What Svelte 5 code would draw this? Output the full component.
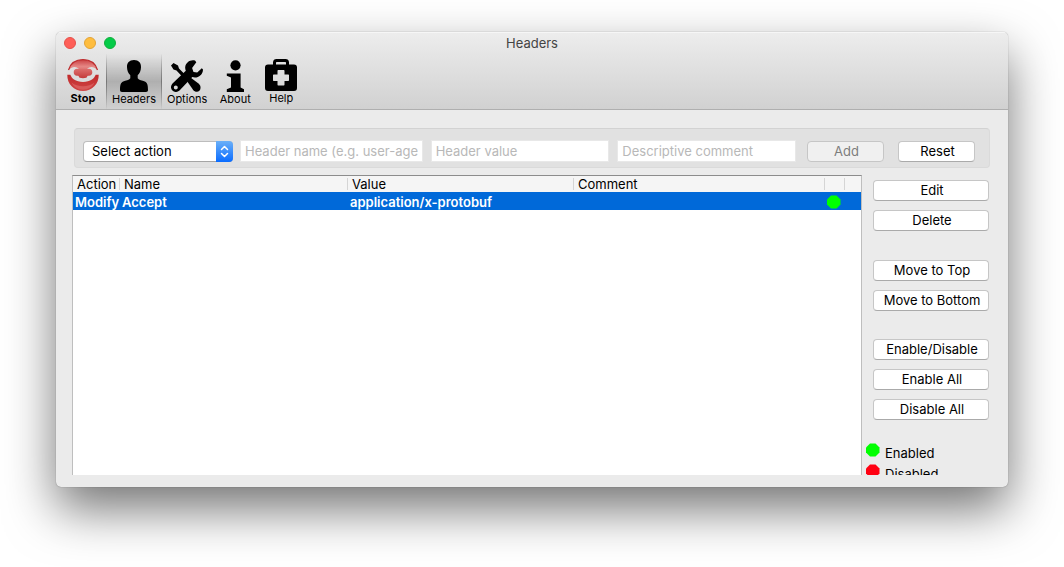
<script>
  const tools = ['Stop', 'Headers', 'Options', 'About', 'Help'];
  let active = $state('Headers');
  let action = $state('');

  const groups = [
    ['Edit', 'Delete'],
    ['Move to Top', 'Move to Bottom'],
    ['Enable/Disable', 'Enable All', 'Disable All'],
  ];

  const rows = [
    { action: 'Modify', name: 'Accept', value: 'application/x-protobuf', comment: '', enabled: true },
  ];
</script>

{#snippet dot(on)}
  <svg class="dot" viewBox="0 0 14 14" role="img" aria-label={on ? 'enabled' : 'disabled'}>
    <path d="M4 0.500h5.500l4 4v5l-4 4h-5.500l-4-4v-5z" fill={on ? '#00ff00' : '#ff0012'} />
  </svg>
{/snippet}

{#snippet icon(name)}
  <svg class="icon" viewBox="0 0 32 32" aria-hidden="true">
    {#if name === 'Stop'}
      <defs>
        <linearGradient id="dome" x1="0" y1="0" x2="0" y2="1">
          <stop offset="0" stop-color="#c93f41" />
          <stop offset=".6" stop-color="#e58684" />
          <stop offset="1" stop-color="#dd6f6d" />
        </linearGradient>
        <linearGradient id="core" x1="0" y1="0" x2="0" y2="1">
          <stop offset="0" stop-color="#dd6f6d" />
          <stop offset="1" stop-color="#c43a3a" />
        </linearGradient>
        <linearGradient id="base" x1="0" y1="0" x2="0" y2="1">
          <stop offset="0" stop-color="#c02a2b" />
          <stop offset="1" stop-color="#d04646" />
        </linearGradient>
      </defs>
      <path d="M1.500 11.200C3.500 4.500 9 .5 16 .5s12.500 4 14.500 10.700C28.500 9 26.500 8 24.500 8c-2 0-3 .8-4 1.300V12h-9V9.300C10.500 8.800 9.500 8 7.500 8c-2 0-4 1-6 3.200z" fill="url(#dome)" />
      <path d="M1.500 11C3.500 4.500 9 .7 16 .7s12.500 3.800 14.500 10.300" fill="none" stroke="#bd2c2e" stroke-width="1.200" />
      <path d="M10 9.800h12c2 0 3.300 1.500 3.300 3.500S24 16.800 22 16.800h-1c-.6 0-.8.3-.8.8 0 1-1.500 1.700-4.200 1.700s-4.200-.7-4.200-1.700c0-.5-.2-.8-.8-.8h-1c-2 0-3.300-1.500-3.300-3.500S8 9.800 10 9.800z" fill="url(#core)" />
      <path d="M.3 15.800h3C4.500 18 5 19.300 7 20.600c2.500 1.700 5.500 2.300 9 2.300s6.500-.6 9-2.300c2-1.300 2.500-2.600 3.700-4.800h3C32 25 25 32 16 32S0 25 .3 15.800z" fill="url(#base)" />
      <path d="M4.500 23.500c3.200 2.600 7 3.800 11.500 3.800s8.300-1.200 11.500-3.800C25.500 28 21 30.700 16 30.700S6.500 28 4.500 23.500z" fill="#d85b5a" />
    {:else if name === 'Headers'}
      <path d="M16 0c4.700 0 7.200 3 7 7.200-.1 3.400-1.400 6.400-3.300 8.100v2.900c1.200 1.800 4.600 2.300 7.100 3.200 2.700 1 3.200 4.200 3.200 8.600 0 1.300-.7 2-2 2H4c-1.300 0-2-.7-2-2 0-4.400.5-7.600 3.200-8.600 2.500-.9 5.900-1.400 7.100-3.200v-2.900C10.400 13.600 9.100 10.600 9 7.200 8.800 3 11.300 0 16 0z" />
    {:else if name === 'Options'}
      <path d="M0 5.500 2.500 3 7 5.500 8 8.500 15 15.500 12.500 18 5.500 10.500 2.500 9.500z" />
      <path d="m19.500 17.500 8.300 6.300c2.300 2.200 2.100 5.200.6 6.900-1.600 1.700-4.700 1.400-6.400-1l-5.700-8.100z" />
      <path fill-rule="evenodd" d="M24 .5c-4.800-1.200-9.200 1.900-9.800 6.500-.1 1.500.1 2.500.6 3.700L1.500 23.500c-4.500 5 2 11.500 7 7L21.300 17.100c4.900 1.700 10.700-1.800 10.700-7.600l-1.200-1.200-4.600 4.200-3.700-.6-1.400-3.900 4.200-5.800zM4.800 25.400a2 2 0 1 1 0 4 2 2 0 0 1 0-4z" />
    {:else if name === 'About'}
      <circle cx="16.500" cy="5.300" r="5.100" />
      <path d="M9.800 13.500h11.800v14l3.400 1.700V32H7.800v-2.800l4.200-1.700v-10l-4.200-1.800v-2.200z" />
    {:else}
      <path fill-rule="evenodd" d="M8 5.500V3.500C8 1 9.500 0 11.500 0h9C22.500 0 24 1 24 3.500v2h5c2 0 3 1.200 3 3V29c0 2-1 3-3 3H3c-2 0-3-1-3-3V8.500c0-1.800 1-3 3-3zM11 5.500h10V4c0-.7-.3-1-1-1h-8c-.7 0-1 .3-1 1zM13.500 11c-.7 0-1 .3-1 1v3.500H9c-.7 0-1 .3-1 1v4.500c0 .7.3 1 1 1h3.500v3.500c0 .7.3 1 1 1h5c.7 0 1-.3 1-1v-3.500H23c.7 0 1-.3 1-1v-4.500c0-.7-.3-1-1-1h-3.500V12c0-.7-.3-1-1-1z" />
    {/if}
  </svg>
{/snippet}

<div class="desktop">
  <div class="window">
    <header>
      <div class="titlebar">
        <div class="lights">
          <button class="light close" aria-label="Close"></button>
          <button class="light minimize" aria-label="Minimize"></button>
          <button class="light zoom" aria-label="Zoom"></button>
        </div>
        <h1>Headers</h1>
      </div>
      <nav>
        {#each tools as tool}
          <button class="tool" class:active={active === tool} class:strong={tool === 'Stop'} onclick={() => (active = tool)}>
            {@render icon(tool)}
            <span>{tool}</span>
          </button>
        {/each}
      </nav>
    </header>

    <main>
      <form class="panel" onsubmit={(e) => e.preventDefault()}>
        <div class="select">
          <select aria-label="Action" bind:value={action}>
            <option value="">Select action</option>
            <option>Add</option>
            <option>Modify</option>
            <option>Filter</option>
          </select>
          <svg viewBox="0 0 17 21" aria-hidden="true">
            <path d="M5.500 8.500 8.500 5.500 11.500 8.500M5.500 12.500 8.500 15.500 11.500 12.500" fill="none" stroke="#fff" stroke-width="1.500" stroke-linecap="round" stroke-linejoin="round" />
          </svg>
        </div>
        <div class="fields">
          <input type="text" aria-label="Header name" placeholder="Header name (e.g. user-agent)" />
          <input type="text" aria-label="Header value" placeholder="Header value" />
          <input type="text" aria-label="Comment" placeholder="Descriptive comment" />
        </div>
        <div class="submit">
          <button class="push" disabled>Add</button>
          <button class="push" type="reset">Reset</button>
        </div>
      </form>

      <div class="content">
        <div class="list">
          <table>
            <colgroup>
              <col class="c-action" /><col class="c-name" /><col class="c-value" /><col /><col class="c-state" /><col class="c-end" />
            </colgroup>
            <thead>
              <tr>
                <th><span>Action</span></th>
                <th><span>Name</span></th>
                <th><span>Value</span></th>
                <th><span>Comment</span></th>
                <th><span></span></th>
                <th><span></span></th>
              </tr>
            </thead>
            <tbody>
              {#each rows as row}
                <tr>
                  <td>{row.action}</td>
                  <td>{row.name}</td>
                  <td>{row.value}</td>
                  <td>{row.comment}</td>
                  <td>{@render dot(row.enabled)}</td>
                  <td></td>
                </tr>
              {/each}
            </tbody>
          </table>
        </div>

        <aside>
          {#each groups as group}
            <div class="group">
              {#each group as label}
                <button class="push">{label}</button>
              {/each}
            </div>
          {/each}
          <ul>
            <li>{@render dot(true)}<span>Enabled</span></li>
            <li>{@render dot(false)}<span>Disabled</span></li>
          </ul>
        </aside>
      </div>
    </main>
  </div>
</div>

<style>
  :global(body) {
    margin: 0;
    background: #fff;
  }

  .desktop {
    box-sizing: border-box;
    height: 100vh;
    padding: 32px 56px 80px;
    overflow: hidden;
    font: 13px/18px Inter, "Liberation Sans", sans-serif;
    color: #000;
  }

  .desktop :is(button, input, select) {
    box-sizing: border-box;
    margin: 0;
    font: inherit;
    color: inherit;
  }

  .window {
    display: flex;
    flex-direction: column;
    height: 100%;
    overflow: hidden;
    border-radius: 5px;
    background: #ebebeb;
    box-shadow: 0 0 1px rgba(0, 0, 0, 0.5), 0 22px 50px rgba(0, 0, 0, 0.55);
  }

  header {
    flex: none;
    border-bottom: 1px solid #afafaf;
    background: linear-gradient(#ededed, #d1d1d1);
    box-shadow: inset 0 1px #f6f6f6;
  }

  .titlebar {
    display: grid;
    grid-template-columns: 1fr auto 1fr;
    align-items: center;
    height: 22px;
    padding: 0 8px;
  }

  .lights {
    display: flex;
    gap: 8px;
  }

  .light {
    width: 12px;
    height: 12px;
    padding: 0;
    border: 1px solid;
    border-radius: 50%;
  }

  .light.close { background: #fe5f58; border-color: #e5504a; }
  .light.minimize { background: #febd3f; border-color: #e2a336; }
  .light.zoom { background: #04cb48; border-color: #12ae3c; }

  h1 {
    margin: 0;
    font-size: 13px;
    font-weight: 400;
    color: #444;
  }

  nav {
    display: flex;
    height: 55px;
    padding-left: 4px;
  }

  .tool {
    display: flex;
    flex-direction: column;
    align-items: center;
    min-width: 46px;
    padding: 6px 5px 0;
    border: 0;
    background: none;
  }

  .tool:last-child {
    padding-top: 5px;
  }

  .tool span {
    font-size: 11px;
    line-height: 14px;
  }

  .tool.strong {
    padding-top: 5px;
  }

  .tool.strong span {
    font-weight: 700;
  }

  .tool.active {
    background: linear-gradient(rgba(0, 0, 0, 0), rgba(0, 0, 0, 0.2) 50%, rgba(0, 0, 0, 0));
    border: solid;
    border-width: 0 1px;
    border-image: linear-gradient(transparent, #777 50%, transparent) 1;
  }

  .icon {
    width: 32px;
    height: 32px;
  }

  main {
    display: flex;
    flex: 1;
    flex-direction: column;
    gap: 7px;
    min-height: 0;
    padding: 18px 18px 12px 16px;
  }

  .panel {
    display: flex;
    align-items: center;
    gap: 7px;
    box-sizing: border-box;
    height: 40px;
    margin: 0 0 0 2px;
    padding: 6px 14px 0 8px;
    border: 1px solid #dadada;
    border-top-color: #d2d2d2;
    border-radius: 4px;
    background: #e1e1e1;
  }

  .select {
    position: relative;
    flex: none;
    width: 150px;
    height: 21px;
  }

  .select select {
    width: 100%;
    height: 21px;
    padding: 0 24px 0 8px;
    appearance: none;
    border: 1px solid #bdbdbd;
    border-bottom-color: #a5a5a5;
    border-radius: 4px;
    background: #fff;
  }

  .select svg {
    position: absolute;
    top: 0;
    right: 0;
    width: 17px;
    height: 21px;
    border-radius: 0 4px 4px 0;
    background: linear-gradient(#6bb0f8, #0a6cff);
    pointer-events: none;
  }

  .fields {
    display: grid;
    flex: 1;
    grid-template-columns: 46fr 45fr 45fr;
    gap: 8px;
    min-width: 0;
  }

  input {
    width: 100%;
    min-width: 0;
    height: 22px;
    padding: 0 4px;
    border: 1px solid #e8e8e8;
    border-radius: 0;
    background: #fff;
  }

  input::placeholder {
    color: #b8b8b8;
    opacity: 1;
  }

  .submit {
    display: flex;
    gap: 14px;
    padding-left: 4px;
  }

  .submit .push {
    width: 77px;
  }

  .push {
    height: 21px;
    padding: 0 0 1px 2px;
    border: 1px solid #c6c6c6;
    border-bottom-color: #aaa;
    border-radius: 4px;
    background: #fff;
    line-height: 18px;
    white-space: nowrap;
  }

  .desktop .push:disabled {
    border-color: #c6c6c6;
    background: #f0f0f0;
    color: #7d7d7d;
  }

  .content {
    display: flex;
    flex: 1;
    gap: 4px;
    min-height: 0;
  }

  .list {
    flex: 1;
    min-width: 0;
    overflow: hidden;
    border: solid #bebebe;
    border-width: 1px 1px 0;
    border-top-color: #8c8c8c;
    background: #fff;
  }

  table {
    width: 100%;
    table-layout: fixed;
    border-collapse: collapse;
  }

  .c-action { width: 47px; }
  .c-name { width: 228px; }
  .c-value { width: 226px; }
  .c-state { width: 20px; }
  .c-end { width: 16px; }

  th {
    height: 16px;
    padding: 0;
    background: #f5f5f5;
    font-weight: 400;
    line-height: 16px;
    text-align: left;
  }

  th span {
    display: block;
    height: 12px;
    padding-left: 4px;
    border-right: 1px solid #d5d5d5;
    line-height: 12px;
    white-space: nowrap;
  }

  th:last-child span {
    border-right: 0;
  }

  td {
    height: 16px;
    padding: 2px 0 0 2px;
    overflow: hidden;
    background: #0069d9;
    color: #fff;
    font-weight: 600;
    line-height: 16px;
    white-space: nowrap;
  }

  .dot {
    display: block;
    flex: none;
    width: 14px;
    height: 14px;
  }

  aside {
    flex: none;
    width: 124px;
    overflow: hidden;
  }

  .group {
    display: grid;
    gap: 9px;
    margin: 0 1px 28px 7px;
  }

  .group:first-child {
    padding-top: 5px;
    margin-bottom: 29px;
  }

  ul {
    display: grid;
    gap: 2px;
    margin: -5px 0 0;
    padding: 0;
    list-style: none;
  }

  li {
    display: flex;
    gap: 5px;
  }

  li span {
    padding-top: 1px;
  }
</style>
